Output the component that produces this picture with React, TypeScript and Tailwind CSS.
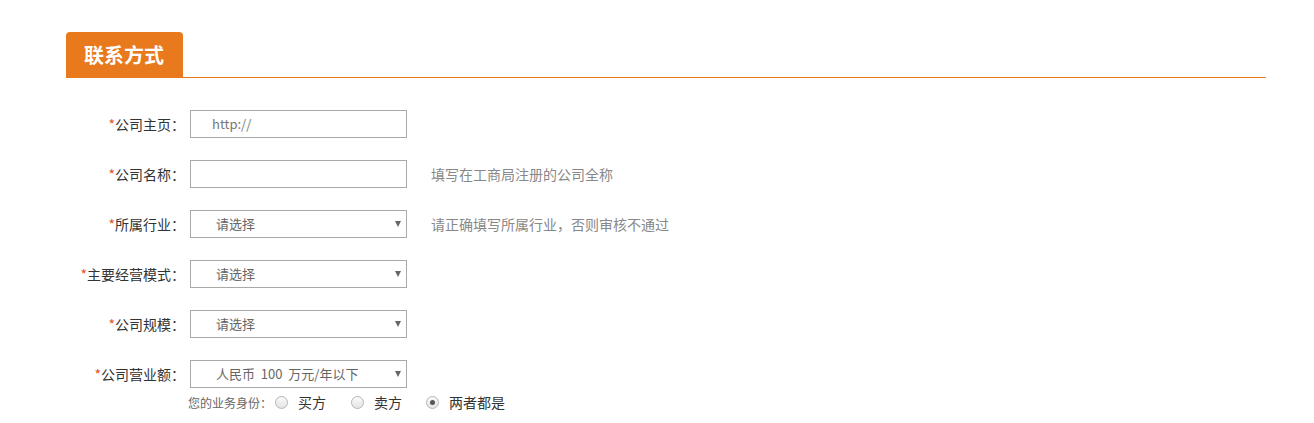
import React from "react";

const font = { fontFamily: '"Microsoft YaHei", "Noto Sans CJK SC", "Noto Sans", sans-serif' };

function Label({ text }: { text: string }) {
  return (
    <div className="w-[124px] shrink-0 pr-[5px] text-right text-[14px] leading-[28px] text-[#333]">
      <span className="text-[#e8501c]">*</span>
      {text}：
    </div>
  );
}

function Select({ value }: { value: string }) {
  return (
    <div className="relative flex h-[28px] w-[217px] items-center whitespace-pre border border-[#a9a9a9] bg-white pl-[25px] text-[13px] text-[#666]">
      {value}
      <span className="absolute right-[5px] top-[10px] h-0 w-0 border-l-[3px] border-r-[3px] border-t-[6px] border-l-transparent border-r-transparent border-t-[#666]" />
    </div>
  );
}

function Radio({ checked, label, className }: { checked?: boolean; label: string; className?: string }) {
  return (
    <div className={"flex items-center " + (className ?? "")}>
      <span className="flex h-[13px] w-[13px] items-center justify-center rounded-full border border-[#b5b5b5] bg-gradient-to-b from-[#fafafa] to-[#e4e4e4]">
        {checked && <span className="h-[5px] w-[5px] rounded-full bg-[#555]" />}
      </span>
      <span className="ml-[10px] text-[14px] text-[#333]">{label}</span>
    </div>
  );
}

export default function App() {
  return (
    <div className="h-[423px] w-[1314px] bg-white" style={font}>
      <div className="ml-[66px] w-[1200px] pt-[32px]">
        <div className="flex border-b border-[#e8791c]">
          <div className="flex h-[45px] w-[117px] items-center rounded-t-[4px] bg-[#e8791c] pl-[18px] text-[20px] font-bold text-white">
            联系方式
          </div>
        </div>
        <div className="mt-[32px] flex flex-col gap-[22px]">
          <div className="flex items-center">
            <Label text="公司主页" />
            <div className="flex h-[28px] w-[217px] items-center border border-[#a9a9a9] pl-[21px] text-[13px] text-[#777]">
              http://
            </div>
          </div>
          <div className="flex items-center">
            <Label text="公司名称" />
            <div className="h-[28px] w-[217px] border border-[#a9a9a9]" />
            <span className="ml-[24px] text-[14px] text-[#888]">填写在工商局注册的公司全称</span>
          </div>
          <div className="flex items-center">
            <Label text="所属行业" />
            <Select value="请选择" />
            <span className="ml-[24px] text-[14px] text-[#888]">请正确填写所属行业，否则审核不通过</span>
          </div>
          <div className="flex items-center">
            <Label text="主要经营模式" />
            <Select value="请选择" />
          </div>
          <div className="flex items-center">
            <Label text="公司规模" />
            <Select value="请选择" />
          </div>
          <div className="flex flex-col">
            <div className="flex items-center">
              <Label text="公司营业额" />
              <Select value="人民币  100  万元/年以下" />
            </div>
            <div className="ml-[122px] mt-[4px] flex items-center">
              <span className="text-[12px] text-[#666]">您的业务身份：</span>
              <Radio label="买方" className="ml-[3px]" />
              <Radio label="卖方" className="ml-[25px]" />
              <Radio checked label="两者都是" className="ml-[24px]" />
            </div>
          </div>
        </div>
      </div>
    </div>
  );
}
